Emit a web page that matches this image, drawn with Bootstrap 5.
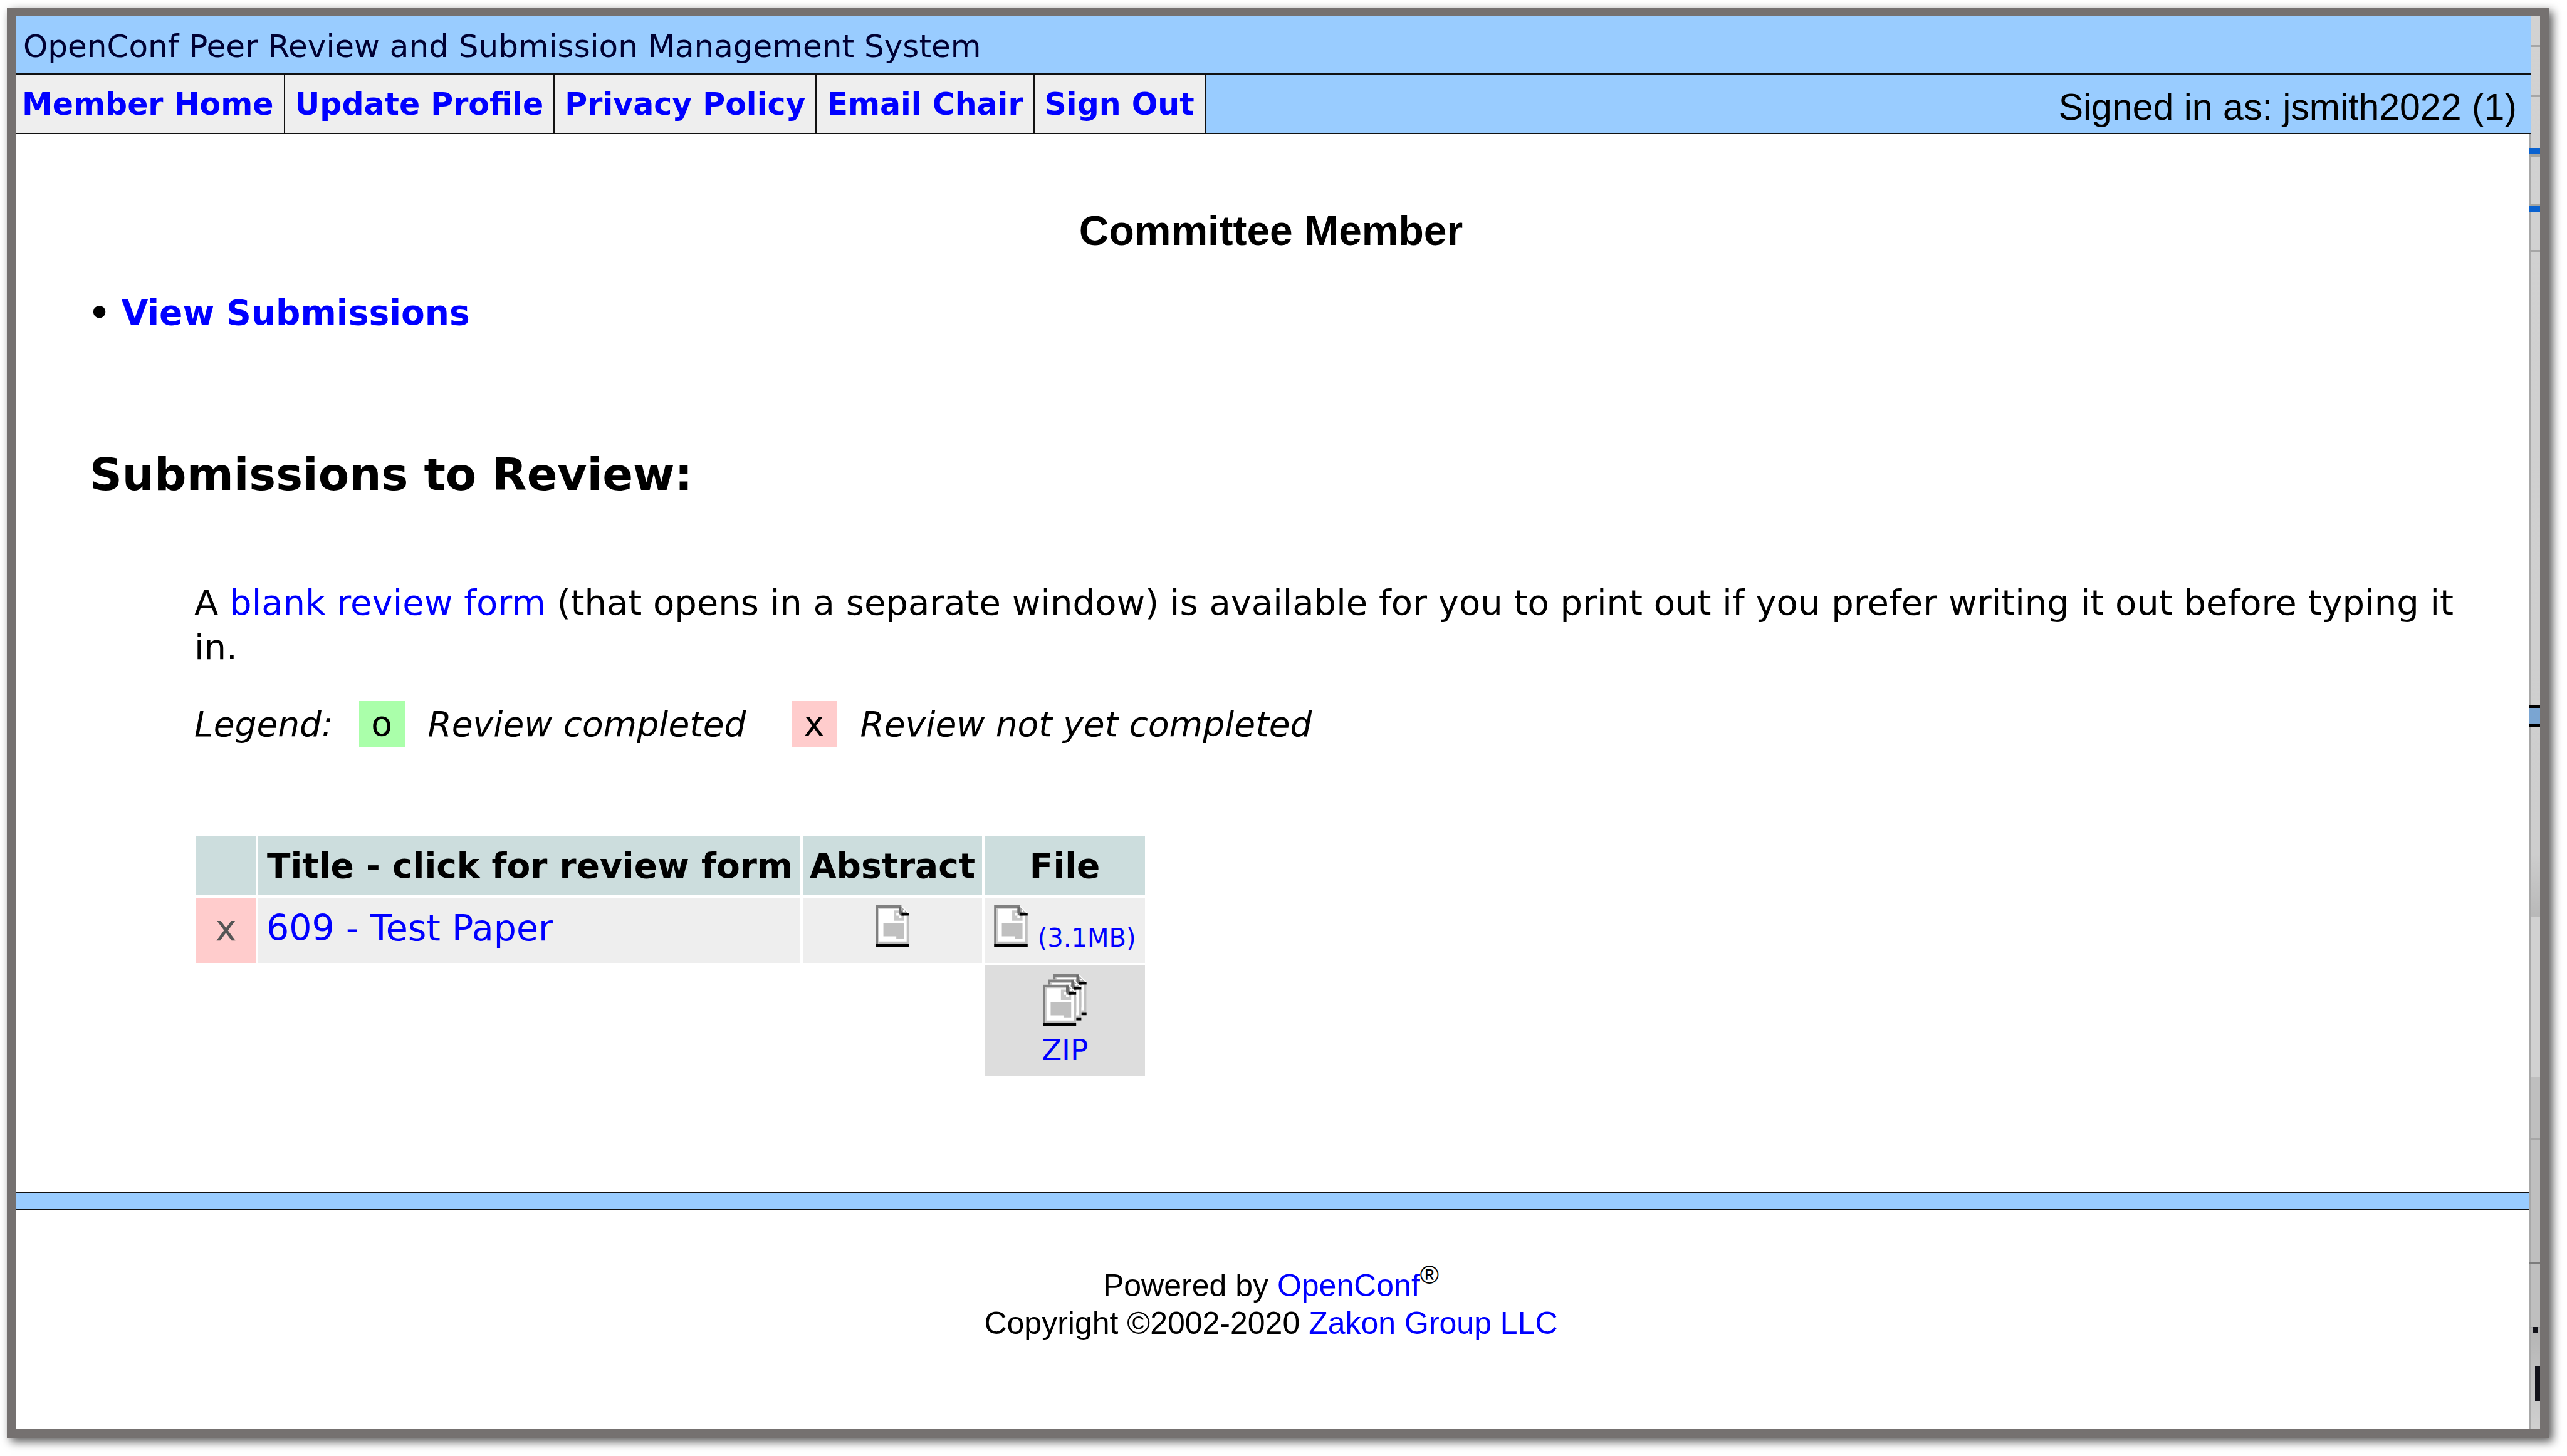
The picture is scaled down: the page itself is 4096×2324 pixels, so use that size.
<!DOCTYPE html>
<html lang="en">
<head>
<meta charset="utf-8">
<meta name="viewport" content="width=device-width, initial-scale=1">
<title>OpenConf Peer Review and Submission Management System</title>
<link href="https://cdn.jsdelivr.net/npm/bootstrap@5.3.0/dist/css/bootstrap.min.css" rel="stylesheet">
<style>
body { font-family: "DejaVu Sans", Verdana, sans-serif; color: #000; background: #fff; font-size: 55px; line-height: 71px; padding: 12px 29px 29px 11px; }
a { color: #00f; text-decoration: none; }
a:hover { color: #00f; text-decoration: underline; }
.arial { font-family: "Liberation Sans", Arial, sans-serif; }
.window-frame { border: 14px solid #757170; box-shadow: 6px 6px 14px rgba(0,0,0,.65); }
.page-header { position: relative; z-index: 1; margin-right: -3px; background: #9cf; }
.page-title { color: #003; font-size: 50px; line-height: 86px; padding: 5px 14px 0 12px; border-bottom: 2px solid #111; }
.menu-bar { border-bottom: 2px solid #111; }
.menu-bar a { background: #eee; font-size: 49px; font-weight: 700; line-height: 91px; padding: 2px 16px 0; border-right: 2px solid #111; }
.menu-bar a:first-child { padding-left: 10px; }
.signed-in { font-size: 59px; line-height: 81px; padding: 12px 22px 0 0; }
.page-main { padding: 114px 4px 180px 0; }
.role-title { font-size: 66px; line-height: 80px; margin: 0 0 56px; }
.actions { margin: 0 0 178px; padding-left: 116px; line-height: 70px; }
.review-title { font-size: 72px; line-height: 90px; margin: 0 0 124px; padding-left: 118px; }
.review-block { padding: 0 80px 0 285px; }
.intro { font-size: 56px; margin-bottom: 51px; }
.legend-row { margin-bottom: 137px; }
.legend-key { width: 73px; margin: 0 37px 0 41px; text-align: center; line-height: 73px; }
.legend-row em { line-height: 74px; }
.legend-gap { margin-left: 72px; }
.done { background: #afa; }
.todo { background: #fcc; }
.sub-table { border-collapse: separate; border-spacing: 4px; margin-left: -1px; }
.sub-table th { background: #cdd; line-height: 89px; padding: 4px 11px 2px; }
.sub-table th.col-title { padding-left: 14px; }
.sub-table td { vertical-align: top; background: #eee; font-size: 57px; line-height: 97px; padding: 0 13px 7px; }
.sub-table td.todo { background: #fcc; color: #555; }
.sub-table td.empty { background: none; }
.sub-table td.icon-cell { padding-top: 12px; line-height: 40px; }
.sub-table td.zip-cell { background: #ddd; padding: 14px 13px 3px; font-size: 47px; line-height: 78px; }
.col-mark { width: 95px; }
.col-title { width: 865px; }
.col-abs { width: 286px; }
.col-file { width: 256px; }
.file-size { font-size: 40px; line-height: 40px; }
.page-icon { width: 54px; height: 66px; }
.stack-icon { width: 70px; height: 82px; }
.page-footer { border-top: 2px solid #111; }
.footer-band { height: 28px; background: #9cf; border-bottom: 2px solid #111; }
.credits { font-size: 50px; line-height: 60px; padding: 90px 4px 130px 0; }
.credits sup { font-size: 41px; }
.edge-strip { width: 18px; }
</style>
</head>
<body class="min-vh-100 d-flex">
<svg class="d-none" aria-hidden="true">
  <symbol id="page" viewBox="0 0 13 16">
    <path d="M0 0h10l3 3v13H0z" fill="#fff"/>
    <path d="M0 0h10v1H1v14H0z" fill="#808080"/>
    <path d="M1 1h8v.4H1.4V14H1z" fill="#c8c8c8"/>
    <path d="M12 4h1v10h-1zM1 14h12v1H1z" fill="#c0c0c0"/>
    <path d="M7 2h4v4H7z" fill="#c8c8c8"/>
    <path d="M8 3h1v1H8zM9 4h1v1H9z" fill="#fff"/>
    <path d="M9 .5h1V2l1 1v1H9.7L9 3z" fill="#6a6a6a"/>
    <path d="M10 .6L12.6 3.2H11L10 2.2z" fill="#a4a4a4"/>
    <path d="M10.6 1.8h.7v.7h-.7z" fill="#fff"/>
    <path d="M10 3.1h3v.9h-3z" fill="#000"/>
    <path d="M3 7h8v6H8v-1H3z" fill="#c0c0c0"/>
    <path d="M0 15h13v1H0z" fill="#000"/>
  </symbol>
</svg>
<div class="window-frame d-flex flex-grow-1">
  <div class="d-flex flex-column flex-grow-1">
    <header class="page-header">
      <div class="page-title">OpenConf Peer Review and Submission Management System</div>
      <div class="menu-bar d-flex">
        <nav class="d-flex">
          <a href="#">Member Home</a>
          <a href="#">Update Profile</a>
          <a href="#">Privacy Policy</a>
          <a href="#">Email Chair</a>
          <a href="#">Sign Out</a>
        </nav>
        <div class="signed-in arial ms-auto">Signed in as: jsmith2022 (1)</div>
      </div>
    </header>
    <main class="page-main">
      <h1 class="role-title arial fw-bold text-center">Committee Member</h1>
      <div class="actions"><b>•</b> <a class="fw-bold" href="#">View Submissions</a></div>
      <h2 class="review-title fw-bold">Submissions to Review:</h2>
      <div class="review-block">
        <p class="intro">A <a href="#">blank review form</a> (that opens in a separate window) is available for you to print out if you prefer writing it out before typing it in.</p>
        <div class="legend-row d-flex">
          <em>Legend:</em>
          <span class="legend-key done">o</span>
          <em>Review completed</em>
          <span class="legend-gap"></span>
          <span class="legend-key todo ms-0">x</span>
          <em>Review not yet completed</em>
        </div>
        <table class="sub-table">
          <thead>
            <tr>
              <th class="col-mark" aria-label="Status"></th>
              <th class="col-title text-nowrap">Title - click for review form</th>
              <th class="col-abs text-center">Abstract</th>
              <th class="col-file text-center">File</th>
            </tr>
          </thead>
          <tbody>
            <tr>
              <td class="todo text-center">x</td>
              <td><a href="#">609 - Test Paper</a></td>
              <td class="icon-cell"><a class="d-flex justify-content-center" href="#" aria-label="Abstract"><svg class="page-icon"><use href="#page"/></svg></a></td>
              <td class="icon-cell"><a class="d-flex justify-content-center align-items-baseline gap-3" href="#"><svg class="page-icon"><use href="#page"/></svg><span class="file-size">(3.1MB)</span></a></td>
            </tr>
            <tr>
              <td class="empty" colspan="3"></td>
              <td class="zip-cell"><a class="d-flex flex-column align-items-center" href="#"><svg class="stack-icon" viewBox="0 0 17 20"><use href="#page" x="4" y="0" width="13" height="16"/><use href="#page" x="2" y="2" width="13" height="16"/><use href="#page" x="0" y="4" width="13" height="16"/></svg>ZIP</a></td>
            </tr>
          </tbody>
        </table>
      </div>
    </main>
    <footer class="page-footer">
      <div class="footer-band"></div>
      <div class="credits arial text-center">Powered by <a href="#">OpenConf</a><sup>®</sup><br>Copyright ©2002-2020 <a href="#">Zakon Group LLC</a></div>
    </footer>
  </div>
  <svg class="edge-strip flex-shrink-0 align-self-stretch" viewBox="0 0 18 2255" preserveAspectRatio="none" aria-hidden="true">
    <defs>
      <linearGradient id="g1" x1="0" y1="0" x2="0" y2="1"><stop offset="0" stop-color="#d2d2d2"/><stop offset=".93" stop-color="#cecece"/><stop offset="1" stop-color="#b8b8b8"/></linearGradient>
      <linearGradient id="g2" x1="0" y1="0" x2="0" y2="1"><stop offset="0" stop-color="#b4b4b4"/><stop offset="1" stop-color="#d0d0d0"/></linearGradient>
    </defs>
    <rect width="18" height="1438" fill="url(#g1)"/>
    <rect y="1438" width="18" height="255" fill="#d1d1d1"/>
    <rect y="1693" width="18" height="400" fill="#bfbfbf"/>
    <rect y="2093" width="18" height="162" fill="url(#g2)"/>
    <rect width="3" height="2255" fill="#a8a8a8"/>
    <path d="M0 46h18v3H0zM0 126h18v3H0zM0 373h18v3H0zM0 1791h18v3H0zM0 2092h18v2H0z" fill="#a6a6a6"/>
    <path d="M0 1989h18v3H0z" fill="#7c7c7c"/>
    <path d="M0 220h18v4H0zM0 299h18v4H0z" fill="#a5a5a0"/>
    <path d="M0 211h18v9H0zM0 303h18v9H0z" fill="#0a62d0"/>
    <path d="M0 1100h18v34H0z" fill="#000"/>
    <path d="M0 1104h18v26H0z" fill="#7aa5d2"/>
    <path d="M6 2092h9v9H6zM10 2155h8v56h-8z" fill="#111119"/>
  </svg>
</div>
<script src="https://cdn.jsdelivr.net/npm/bootstrap@5.3.0/dist/js/bootstrap.bundle.min.js"></script>
</body>
</html>
